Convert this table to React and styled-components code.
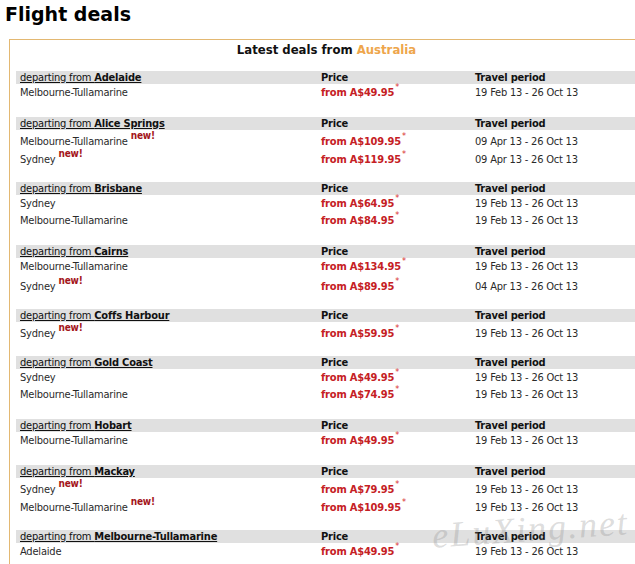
import React from "react";
import styled, { createGlobalStyle } from "styled-components";

const Global = createGlobalStyle`
  html, body { margin: 0; padding: 0; background: #fff; overflow: hidden; }
  body { font-family: "DejaVu Sans Condensed", "Liberation Sans", sans-serif; color: #222; }
`;

const Page = styled.div`
  position: relative;
  width: 635px;
  height: 564px;
  overflow: hidden;
`;

const Title = styled.h1`
  margin: 0;
  padding: 2px 0 0 5px;
  height: 39px;
  box-sizing: border-box;
  font-family: "DejaVu Sans", sans-serif;
  font-size: 19px;
  line-height: 24px;
  font-weight: bold;
  color: #000;
`;

const Box = styled.div`
  margin-left: 9px;
  width: 632px;
  border: 1px solid #e3b872;
  border-bottom: none;
  padding-bottom: 40px;
`;

const Caption = styled.div`
  text-align: center;
  font-size: 13px;
  font-weight: bold;
  line-height: 18px;
  padding-top: 1px;
  margin-bottom: 12px;
  color: #111;
  padding-left: 1px;
`;

const Country = styled.span`
  color: #eea64c;
`;

const Group = styled.section`
  margin-left: 6px;
  margin-bottom: 16px;
`;

const Grid = styled.div`
  display: grid;
  grid-template-columns: 301px 154px 1fr;
  padding-left: 4px;
  font-size: 11px;
  letter-spacing: -0.2px;
`;

const HeadRow = styled(Grid)`
  background: #e0e0e0;
  height: 13px;
  line-height: 13px;
  color: #111;
`;

const HeadCell = styled.div`
  font-weight: bold;
  white-space: nowrap;
`;

const DepartLink = styled.span`
  text-decoration: underline;
  color: #111;
  white-space: nowrap;
  text-underline-offset: 1px;
`;

const Row = styled(Grid)`
  height: ${(p) => (p.$tall ? 18 : 17)}px;
  box-sizing: border-box;
  padding-top: ${(p) => (p.$tall ? 3 : 0)}px;
  line-height: 17px;
  color: #2a2a2a;
`;

const Cell = styled.div`
  white-space: nowrap;
`;

const New = styled.span`
  position: relative;
  top: -6px;
  margin-left: 3px;
  font-size: 10px;
  font-weight: bold;
  color: #a3141a;
`;

const Price = styled.span`
  font-weight: bold;
  color: #c52024;
`;

const Star = styled.span`
  position: relative;
  top: -6px;
  margin-left: 1px;
  font-size: 9px;
  font-weight: normal;
  color: #d93030;
`;

const Watermark = styled.div`
  position: absolute;
  left: 432px;
  top: 508px;
  font-family: "Liberation Serif", serif;
  font-style: italic;
  font-size: 36px;
  letter-spacing: 2px;
  color: rgba(140, 140, 140, 0.3);
  transform: rotate(-4deg);
  pointer-events: none;
  white-space: nowrap;
`;

const FEB = "19 Feb 13 - 26 Oct 13";
const APR = "09 Apr 13 - 26 Oct 13";

const deals = [
  { from: "Adelaide", rows: [["Melbourne-Tullamarine", false, "49.95", FEB]] },
  {
    from: "Alice Springs",
    rows: [
      ["Melbourne-Tullamarine", true, "109.95", APR],
      ["Sydney", true, "119.95", APR],
    ],
  },
  {
    from: "Brisbane",
    rows: [
      ["Sydney", false, "64.95", FEB],
      ["Melbourne-Tullamarine", false, "84.95", FEB],
    ],
  },
  {
    from: "Cairns",
    rows: [
      ["Melbourne-Tullamarine", false, "134.95", FEB],
      ["Sydney", true, "89.95", "04 Apr 13 - 26 Oct 13"],
    ],
  },
  { from: "Coffs Harbour", rows: [["Sydney", true, "59.95", FEB]] },
  {
    from: "Gold Coast",
    rows: [
      ["Sydney", false, "49.95", FEB],
      ["Melbourne-Tullamarine", false, "74.95", FEB],
    ],
  },
  { from: "Hobart", rows: [["Melbourne-Tullamarine", false, "49.95", FEB]] },
  {
    from: "Mackay",
    rows: [
      ["Sydney", true, "79.95", FEB],
      ["Melbourne-Tullamarine", true, "109.95", FEB],
    ],
  },
  {
    from: "Melbourne-Tullamarine",
    rows: [["Adelaide", false, "49.95", FEB]],
  },
];

export default function App() {
  return (
    <Page>
      <Global />
      <Title>Flight deals</Title>
      <Box>
        <Caption>
          Latest deals from <Country>Australia</Country>
        </Caption>
        {deals.map((g) => (
          <Group key={g.from}>
            <HeadRow>
              <div>
                <DepartLink>
                  departing from <b>{g.from}</b>
                </DepartLink>
              </div>
              <HeadCell>Price</HeadCell>
              <HeadCell>Travel period</HeadCell>
            </HeadRow>
            {g.rows.map(([dest, isNew, price, period]) => (
              <Row key={dest} $tall={isNew}>
                <Cell>
                  {dest}
                  {isNew && <New>new!</New>}
                </Cell>
                <Cell>
                  <Price>from A${price}</Price>
                  <Star>*</Star>
                </Cell>
                <Cell>{period}</Cell>
              </Row>
            ))}
          </Group>
        ))}
      </Box>
      <Watermark>eLuXing.net</Watermark>
    </Page>
  );
}
